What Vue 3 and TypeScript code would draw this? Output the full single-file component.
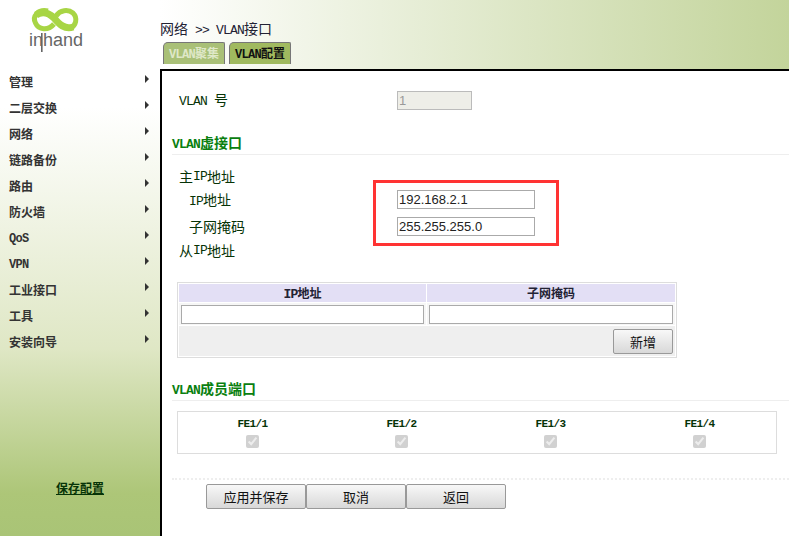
<script setup lang="ts">
const menu = ['管理', '二层交换', '网络', '链路备份', '路由', '防火墙', 'QoS', 'VPN', '工业接口', '工具', '安装向导']
const latinItems = ['QoS', 'VPN']
const ports = ['FE1/1', 'FE1/2', 'FE1/3', 'FE1/4']
</script>

<template>
  <div class="page">
    <aside class="side">
      <svg class="logo" width="60" height="48" viewBox="0 0 60 48">
        <g fill="none" stroke="#a8d545">
          <path d="M10 9 C16 5 22 6 28 12 C33 18 39 24 47 21" stroke-width="7" />
          <path d="M22 5 C12 3 6 10 9.5 17 C12.500 24 22 25 28 18" stroke-width="5" />
          <path d="M30 10 C34 4 42 3 47 7 C52 12 50 20 44 22.500" stroke-width="5" />
        </g>
        <text x="3" y="40" textLength="54" class="logo-text">inhand</text>
        <rect x="15" y="27" width="1.6" height="19" fill="#666" />
      </svg>
      <nav class="menu">
        <div v-for="m in menu" :key="m" class="menu-item">
          <span :class="{ 'menu-lat': latinItems.includes(m) }">{{ m }}</span><i class="arrow"></i>
        </div>
      </nav>
      <a class="save">保存配置</a>
    </aside>
    <header class="head">
      <div class="crumb">网络<span class="lat"> &gt;&gt; VLAN</span>接口</div>
      <div class="tabs">
        <span class="tab off"><span class="lat small">VLAN</span>聚集</span>
        <span class="tab on"><span class="lat small">VLAN</span>配置</span>
      </div>
    </header>
    <main class="main">
      <div class="vlan-row">
        <label class="field-label"><span class="lat">VLAN </span>号</label>
        <input class="inp short" value="1" disabled />
      </div>
      <h3 class="sec first"><span class="lat">VLAN</span>虚接口</h3>
      <div class="form">
        <div class="line l1">主<span class="lat">IP</span>地址</div>
        <div class="line l2 sub"><label class="field-label"><span class="lat">IP</span>地址</label><input class="inp" value="192.168.2.1" /></div>
        <div class="line l3 sub"><label class="field-label">子网掩码</label><input class="inp" value="255.255.255.0" /></div>
        <div class="line l4">从<span class="lat">IP</span>地址</div>
        <div class="redbox"></div>
      </div>
      <div class="tbl">
        <div class="th"><span class="lat">IP</span>地址</div>
        <div class="th">子网掩码</div>
        <div class="td"><input class="inp wide" /></div>
        <div class="td"><input class="inp wide" /></div>
        <div class="tf"><button class="btn add">新增</button></div>
      </div>
      <h3 class="sec second"><span class="lat">VLAN</span>成员端口</h3>
      <div class="ports">
        <div v-for="p in ports" :key="p" class="port">
          <b class="port-name">{{ p }}</b>
          <input type="checkbox" checked disabled />
        </div>
      </div>
      <div class="actions">
        <button class="btn act">应用并保存</button>
        <button class="btn act">取消</button>
        <button class="btn act">返回</button>
      </div>
    </main>
  </div>
</template>

<style>
html, body { margin: 0; background: #fff; }
</style>

<style scoped>
.page {
  width: 789px;
  height: 536px;
  display: grid;
  grid-template-columns: 160px 1fr;
  grid-template-rows: 69px 1fr;
  overflow: hidden;
  font-family: "Noto Sans CJK SC", sans-serif;
  font-size: 14px;
  color: #063306;
}
.lat {
  font-family: "Liberation Mono", monospace;
  font-size: 13px;
  letter-spacing: -0.8px;
  line-height: 1;
  white-space: pre;
}
.lat.small { font-size: 12px; letter-spacing: -0.7px; }
.side {
  grid-row: 1 / 3;
  background: linear-gradient(180deg, #fff 0%, #fff 20%, #dfe7c5 65%, #adc678 92%, #a9c476 100%);
  display: flex;
  flex-direction: column;
}
.logo { display: block; margin: 6px 0 0 26px; }
.logo-text { font-family: "Liberation Sans", sans-serif; font-size: 18px; fill: #666; }
.menu { margin-top: 14px; }
.menu-item {
  height: 26px;
  padding-left: 9px;
  padding-right: 11px;
  display: flex;
  align-items: center;
  justify-content: space-between;
  font-size: 12px;
  font-weight: 700;
  color: #333;
}
.menu-lat {
  font-family: "Liberation Mono", monospace;
  font-size: 12px;
  letter-spacing: -0.7px;
  line-height: 1;
  margin-top: 4px;
}
.arrow {
  display: block;
  border-left: 4px solid #333;
  border-top: 4px solid transparent;
  border-bottom: 4px solid transparent;
  margin-top: -5px;
}
.save {
  margin-top: 125px;
  margin-left: 56px;
  font-size: 12px;
  font-weight: 700;
  color: #063306;
  text-decoration: underline;
}
.head {
  padding-top: 18px;
  box-sizing: border-box;
  background: linear-gradient(90deg, #fff, #c3d49b);
}
.crumb { height: 23px; line-height: 20px; font-size: 14px; color: #223; }
.tabs { display: flex; gap: 4px; margin-left: 3px; margin-top: 1px; }
.tab {
  width: 62px;
  height: 22px;
  line-height: 20px;
  text-align: center;
  font-size: 12px;
  font-weight: 700;
  box-sizing: border-box;
  border: 1px solid #777;
  border-bottom: none;
  border-radius: 5px 2px 0 0;
  background: #a0ba5f;
  color: #111;
  white-space: nowrap;
  overflow: hidden;
}
.tab.off { background: #a9c077; color: #dfe8c8; }
.main {
  background: #fff;
  border-left: 2px solid #000;
  border-top: 2px solid #000;
  padding-left: 10px;
  position: relative;
}
.vlan-row { display: flex; align-items: center; padding: 20px 0 0 7px; height: 19px; }
.vlan-row .field-label { margin-top: -3px; }
.field-label { width: 218px; display: block; }
.inp {
  box-sizing: border-box;
  width: 138px;
  height: 19px;
  padding: 0 1px;
  border: 1px solid #aaa;
  font: 13px "Liberation Sans", sans-serif;
  color: #222;
  background: #fff;
  outline: none;
}
.inp.short { width: 75px; background: #eeeee8; color: #999; border-color: #bbb; }
.inp.wide { width: 100%; display: block; }
.sec {
  margin: 0;
  font-size: 14px;
  font-weight: 700;
  color: #0a8010;
  border-bottom: 1px solid #eee;
  height: 20px;
  line-height: 16px;
}
.sec.first { margin-top: 24px; }
.sec.second { margin-top: 22px; }
.form { padding: 11px 0 0 7px; position: relative; height: 116px; }
.line { display: flex; align-items: center; white-space: pre; }
.l1 { height: 20px; }
.l2 { margin-top: 3px; height: 20px; }
.l3 { margin-top: 7px; height: 20px; }
.l4 { margin-top: 4px; height: 20px; }
.sub { padding-left: 10px; }
.sub .field-label { width: 208px; }
.redbox {
  position: absolute;
  left: 201px;
  top: 25px;
  width: 180px;
  height: 60px;
  border: 3px solid #f33;
}
.tbl {
  margin-left: 5px;
  width: 500px;
  box-sizing: border-box;
  border: 1px solid #ddd;
  padding: 1px;
  display: grid;
  grid-template-columns: 247px 1fr;
  gap: 1px;
}
.th {
  background: #e3dff5;
  height: 18px;
  line-height: 18px;
  text-align: center;
  font-size: 12px;
  font-weight: 700;
  color: #223;
}
.td { background: #f6f6f6; padding: 2px 2px 1px; height: 22px; box-sizing: border-box; }
.tf {
  grid-column: 1 / 3;
  background: #efefef;
  height: 30px;
  display: flex;
  justify-content: flex-end;
  align-items: center;
  padding-right: 2px;
}
.btn {
  box-sizing: border-box;
  border: 1px solid #999;
  border-radius: 2px;
  background: linear-gradient(180deg, #f8f8f8, #d8d8d8);
  font: 13px "Noto Sans CJK SC", sans-serif;
  color: #111;
  padding: 0;
}
.add { width: 60px; height: 25px; }
.ports {
  margin: 10px 0 0 5px;
  width: 600px;
  height: 43px;
  box-sizing: border-box;
  border: 1px solid #ddd;
  display: grid;
  grid-template-columns: repeat(4, 1fr);
  padding: 0 2px 0 0;
}
.port {
  display: flex;
  flex-direction: column;
  align-items: center;
  padding-top: 5px;
  box-sizing: border-box;
}
.port-name {
  font-family: "Liberation Mono", monospace;
  font-size: 11px;
  letter-spacing: -0.6px;
  color: #063306;
  height: 14px;
  line-height: 14px;
}
.port input { margin: 4px 0 0; width: 13px; height: 13px; }
.actions {
  margin-top: 24px;
  border-top: 2px dotted #eee;
  padding: 4px 0 0 34px;
  display: flex;
}
.act { width: 100px; height: 25px; }
</style>
